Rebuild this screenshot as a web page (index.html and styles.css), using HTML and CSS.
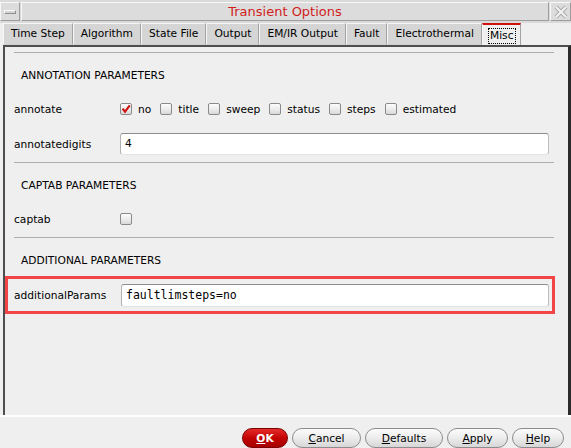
FILE: index.html
```html
<!DOCTYPE html>
<html>
<head>
<meta charset="utf-8">
<title>Transient Options</title>
<link rel="stylesheet" href="styles.css">
</head>
<body>
<div class="window">
  <header class="titlebar">
    <div class="tb-btn tb-menu"><span class="tb-bar"></span></div>
    <div class="tb-title">Transient Options</div>
    <div class="tb-btn tb-close">
      <svg width="18" height="16" viewBox="0 0 18 16">
        <path d="M4 3L14 13M14 3L4 13" stroke="#a9a9a9" stroke-width="4"/>
        <path d="M4 3L14 13M14 3L4 13" stroke="#f4f4f4" stroke-width="2"/>
      </svg>
    </div>
  </header>

  <nav class="tabs">
    <div class="tab">Time Step</div>
    <div class="tab">Algorithm</div>
    <div class="tab">State File</div>
    <div class="tab">Output</div>
    <div class="tab">EM/IR Output</div>
    <div class="tab">Fault</div>
    <div class="tab">Electrothermal</div>
    <div class="tab active"><span class="focus">Misc</span></div>
  </nav>

  <main class="panel">
    <div class="sep"></div>
    <div class="section-title">ANNOTATION PARAMETERS</div>
    <div class="row row-annotate">
      <div class="label">annotate</div>
      <div class="opts">
        <div class="opt"><span class="cb checked"><svg width="10" height="10" viewBox="0 0 10 10"><path d="M1.6 4.6L4 7.6L8.8 1.4" fill="none" stroke="#d01515" stroke-width="2.2"/></svg></span><span>no</span></div>
        <div class="opt"><span class="cb"></span><span>title</span></div>
        <div class="opt"><span class="cb"></span><span>sweep</span></div>
        <div class="opt"><span class="cb"></span><span>status</span></div>
        <div class="opt"><span class="cb"></span><span>steps</span></div>
        <div class="opt"><span class="cb"></span><span>estimated</span></div>
      </div>
    </div>
    <div class="row row-digits">
      <div class="label">annotatedigits</div>
      <div class="field">4</div>
    </div>
    <div class="sep sep-mid"></div>
    <div class="section-title">CAPTAB PARAMETERS</div>
    <div class="row row-captab">
      <div class="label">captab</div>
      <span class="cb"></span>
    </div>
    <div class="sep sep-mid"></div>
    <div class="section-title">ADDITIONAL PARAMETERS</div>
    <div class="highlight">
      <div class="label label-wide">additionalParams</div>
      <div class="field mono">faultlimsteps=no</div>
    </div>
  </main>

  <footer class="buttons">
    <div class="btn btn-ok"><span><u>O</u>K</span></div>
    <div class="btn btn-cancel"><span><u>C</u>ancel</span></div>
    <div class="btn btn-defaults"><span><u>D</u>efaults</span></div>
    <div class="btn btn-apply"><span><u>A</u>pply</span></div>
    <div class="btn btn-help"><span><u>H</u>elp</span></div>
  </footer>
</div>
</body>
</html>
```

FILE: styles.css
```css
* { box-sizing: border-box; }
html, body { margin: 0; padding: 0; }
body {
  width: 571px;
  height: 448px;
  overflow: hidden;
  background: #efefef;
  font-family: "DejaVu Sans", "Noto Sans", sans-serif;
  font-size: 10.67px;
  color: #000;
}
.window {
  display: flex;
  flex-direction: column;
  height: 448px;
}

/* title bar */
.titlebar {
  display: flex;
  height: 23px;
  flex: none;
  padding: 2px 0 2px 0;
  gap: 1px;
  background: #dadada;
}
.tb-btn {
  height: 19px;
  border: 1px solid;
  border-color: #f7f7f7 #9c9c9c #9c9c9c #f7f7f7;
  background: #dcdcdc;
  display: flex;
  align-items: center;
  justify-content: center;
}
.tb-menu { width: 20px; }
.tb-bar {
  width: 12px;
  height: 4px;
  border: 1px solid;
  border-color: #fafafa #8e8e8e #8e8e8e #fafafa;
  background: #d4d4d4;
}
.tb-title {
  flex: 1;
  height: 19px;
  border: 1px solid;
  border-color: #f7f7f7 #9c9c9c #9c9c9c #f7f7f7;
  background: #dcdcdc;
  text-align: center;
  color: #d21c1c;
  font-size: 13px;
  line-height: 17px;
}
.tb-close { width: 21px; }

/* tabs */
.tabs {
  display: flex;
  height: 22px;
  flex: none;
  padding-left: 3px;
}
.tab {
  padding: 0 7px;
  border: 1px solid;
  border-color: #f6f6f6 #a2a2a2 #cfcfcf #f6f6f6;
  background: #d5d5d5;
  line-height: 20px;
  white-space: nowrap;
}
.tab.active {
  background: #efefef;
  border-top: 2px solid #d01010;
  border-bottom: none;
  padding: 3px 4px 0 5px;
  line-height: 14px;
}
.focus {
  display: block;
  border: 1px dotted #000;
  padding: 0 1px;
}

/* panel */
.panel {
  flex: 1;
  margin-left: 3px;
  border-top: 2px solid #4e4e4e;
  border-left: 2px solid #4e4e4e;
  border-right: 3px solid #2b2b2b;
  padding: 5px 14px 0 9px;
  background: #efefef;
}
.sep {
  height: 1px;
  background: #adadad;
}
.sep-mid { margin-top: 6px; }
.section-title {
  padding: 16px 0 0 7px;
  line-height: 14px;
}
.row {
  display: flex;
  align-items: center;
  height: 24px;
}
.row-annotate { margin-top: 14px; }
.row-digits { margin-top: 11px; padding-right: 5px; }
.row-captab { margin-top: 14px; }
.label {
  width: 106px;
  flex: none;
  white-space: nowrap;
}
.label-wide { width: 107px; }
.opts {
  display: flex;
  align-items: center;
}
.opt {
  display: flex;
  align-items: center;
  gap: 6px;
  margin-right: 9px;
}
.cb {
  width: 12px;
  height: 12px;
  flex: none;
  border: 1px solid #8a8a8a;
  border-radius: 2px;
  background: linear-gradient(#fdfdfd, #e9e9e9 60%, #d9d9d9);
  display: flex;
  align-items: center;
  justify-content: center;
}
.field {
  flex: 1;
  height: 22px;
  background: #fff;
  border: 1px solid;
  border-color: #8d8d8d #bdbdbd #e4e4e4 #b2b2b2;
  border-radius: 3px;
  padding: 0 4px;
  line-height: 20px;
}
.mono {
  font-family: "DejaVu Sans Mono", "Liberation Mono", monospace;
  font-size: 11.5px;
  height: 23px;
  line-height: 21px;
}
.highlight {
  display: flex;
  align-items: center;
  height: 38px;
  margin: 8px -1px 0 -9px;
  border: 3px solid #f24646;
  padding: 0 3px 0 6px;
}

/* buttons */
.buttons {
  height: 33px;
  flex: none;
  border-top: 2px solid #ffffff;
  display: flex;
  justify-content: flex-end;
  align-items: flex-start;
  gap: 4px;
  padding: 11px 7px 0 0;
}
.btn {
  height: 20px;
  border: 1px solid #8c8c8c;
  border-radius: 10px;
  background: linear-gradient(#fbfbfb, #ececec 50%, #d6d6d6);
  display: flex;
  align-items: center;
  justify-content: center;
  white-space: nowrap;
}
.btn-ok {
  width: 46px;
  background: linear-gradient(#e42a2a, #c40404 50%, #a60000);
  border-color: #7c0000;
  color: #fff;
  font-weight: bold;
}
.btn-cancel { width: 69px; }
.btn-defaults { width: 78px; }
.btn-apply { width: 61px; }
.btn-help { width: 52px; }
```
